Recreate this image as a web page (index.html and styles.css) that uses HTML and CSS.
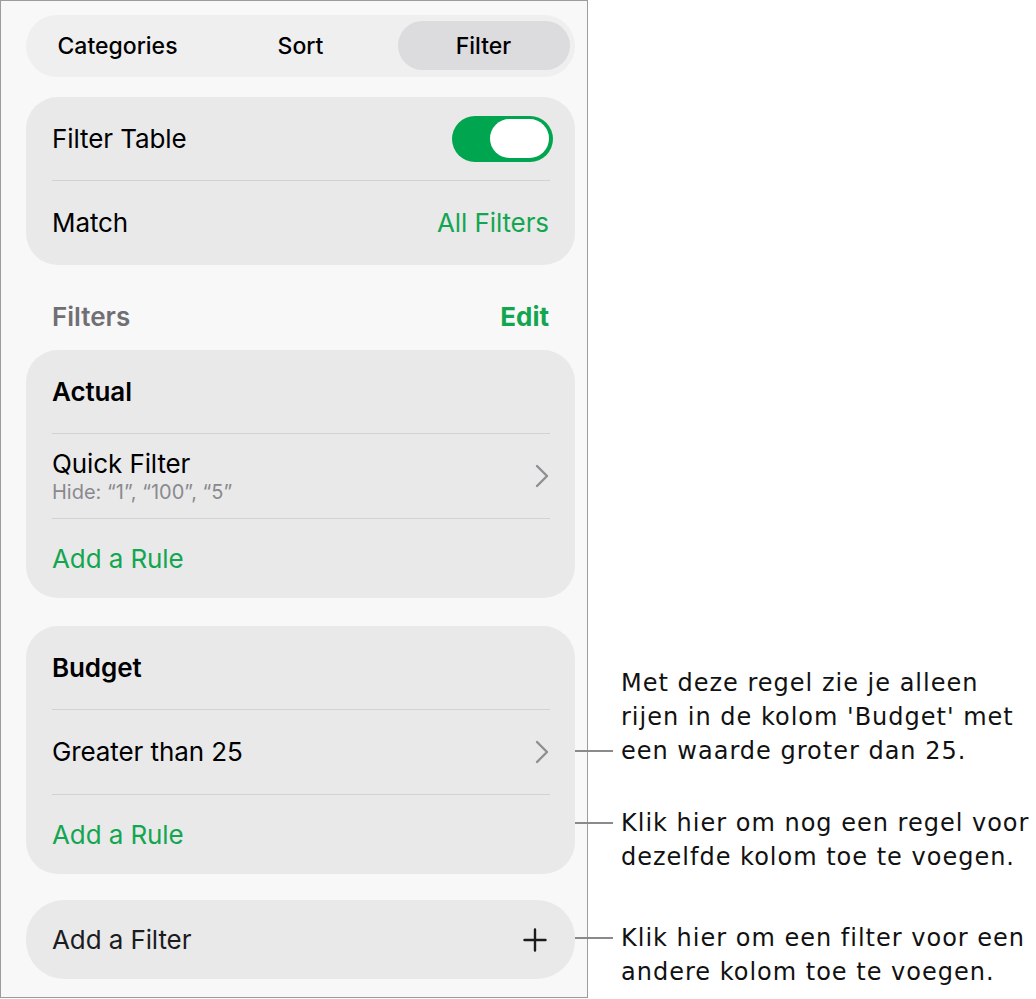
FILE: index.html
```html
<!DOCTYPE html>
<html lang="nl">
<head>
<meta charset="utf-8">
<title>Filter</title>
<link rel="stylesheet" href="styles.css">
</head>
<body>
<div class="page">
  <div class="panel">
    <div class="segmented">
      <div class="seg">Categories</div>
      <div class="seg">Sort</div>
      <div class="seg selected">Filter</div>
    </div>

    <div class="card">
      <div class="row row-first">
        <span class="label">Filter Table</span>
        <span class="toggle"><span class="knob"></span></span>
      </div>
      <div class="sep"></div>
      <div class="row row-mid">
        <span class="label">Match</span>
        <span class="label green">All Filters</span>
      </div>
    </div>

    <div class="section-head">
      <span class="head-title">Filters</span>
      <span class="head-edit">Edit</span>
    </div>

    <div class="card">
      <div class="row row-first"><span class="label bold">Actual</span></div>
      <div class="sep"></div>
      <div class="row row-mid">
        <div class="stack">
          <span class="label">Quick Filter</span>
          <span class="sub">Hide: “1”, “100”, “5”</span>
        </div>
        <svg class="chev" width="16" height="24" viewBox="0 0 16 24"><path d="M3 2 L13 12 L3 22" fill="none" stroke="#8e8e93" stroke-width="2.4" stroke-linecap="round" stroke-linejoin="round"/></svg>
      </div>
      <div class="sep"></div>
      <div class="row row-last"><span class="label green">Add a Rule</span></div>
    </div>

    <div class="card card-gap">
      <div class="row row-first"><span class="label bold">Budget</span></div>
      <div class="sep"></div>
      <div class="row row-mid">
        <span class="label">Greater than 25</span>
        <svg class="chev" width="16" height="24" viewBox="0 0 16 24"><path d="M3 2 L13 12 L3 22" fill="none" stroke="#8e8e93" stroke-width="2.4" stroke-linecap="round" stroke-linejoin="round"/></svg>
      </div>
      <div class="sep"></div>
      <div class="row row-last"><span class="label green">Add a Rule</span></div>
    </div>

    <div class="card add-card">
      <span class="label dim">Add a Filter</span>
      <svg class="plus" width="24" height="24" viewBox="0 0 24 24"><path d="M12 1.5 V22.5 M1.5 12 H22.5" fill="none" stroke="#1c1c1e" stroke-width="2.4" stroke-linecap="round"/></svg>
    </div>
  </div>

  <div class="note note-1">
    <span class="leader"></span>
    <p>Met deze regel zie je alleen<br>rijen in de kolom 'Budget' met<br>een waarde groter dan 25.</p>
  </div>
  <div class="note note-2">
    <span class="leader"></span>
    <p>Klik hier om nog een regel voor<br>dezelfde kolom toe te voegen.</p>
  </div>
  <div class="note note-3">
    <span class="leader"></span>
    <p>Klik hier om een filter voor een<br>andere kolom toe te voegen.</p>
  </div>
</div>
</body>
</html>
```

FILE: styles.css
```css
* { box-sizing: border-box; }
html, body { margin: 0; padding: 0; background: #ffffff; }
body { font-family: Inter, "Liberation Sans", sans-serif; color: #000; }

.page {
  position: relative;
  width: 1036px;
  height: 999px;
}

.panel {
  width: 588px;
  height: 998px;
  border: 1px solid #9c9c9c;
  background: #f8f8f8;
  padding: 14px 12px 0 25px;
  display: flex;
  flex-direction: column;
}

.segmented {
  width: 549px;
  height: 62px;
  border-radius: 31px;
  background: #efeff0;
  display: grid;
  grid-template-columns: repeat(3, 1fr);
  flex-shrink: 0;
}
.seg {
  margin: 6px 5.5px 7px;
  border-radius: 25px;
  display: flex;
  align-items: center;
  justify-content: center;
  font-size: 23px;
  font-weight: 500;
  letter-spacing: 0;
  color: #000;
}
.seg.selected { background: #dcdcdf; }

.card {
  width: 549px;
  background: #e9e9ea;
  border-radius: 32px;
  margin-top: 20px;
  flex-shrink: 0;
}
.card-gap { margin-top: 28px; }

.row {
  display: flex;
  align-items: center;
  justify-content: space-between;
  padding: 0 26px;
}
.row-first { height: 83px; }
.row-mid { height: 84px; }
.row-last { height: 79px; }

.sep {
  height: 1px;
  margin: 0 25px 0 26px;
  background: #d2d2d4;
}

.label {
  font-size: 26px;
  line-height: 30px;
  letter-spacing: -0.1px;
  color: #000;
}
.label.bold { font-weight: 600; }
.label.green { color: #13a650; }
.label.dim { color: #1c1c1e; }

.stack { display: flex; flex-direction: column; }
.sub {
  font-size: 20px;
  line-height: 24px;
  margin-top: 1px;
  color: #8a8a8e;
}

.chev { margin-right: -1px; }

.toggle {
  width: 101px;
  height: 46px;
  border-radius: 23px;
  background: #00a54f;
  display: flex;
  justify-content: flex-end;
  align-items: center;
  padding: 0 4px;
  margin-right: -4px;
}
.knob {
  width: 59px;
  height: 39px;
  border-radius: 20px;
  background: #ffffff;
}

.section-head {
  width: 549px;
  display: flex;
  justify-content: space-between;
  padding: 36px 26px 17px 26px;
  flex-shrink: 0;
}
.head-title {
  font-size: 26px;
  line-height: 32px;
  font-weight: 600;
  color: #707074;
}
.head-edit {
  font-size: 26px;
  line-height: 32px;
  font-weight: 700;
  color: #13a650;
}
.section-head + .card { margin-top: 0; }

.add-card {
  height: 79px;
  border-radius: 38px;
  margin-top: 26px;
  display: flex;
  align-items: center;
  justify-content: space-between;
  padding: 0 28px 0 26px;
}

/* callouts */
.note {
  position: absolute;
  left: 575px;
  display: flex;
  font-family: "DejaVu Sans", Verdana, sans-serif;
  font-size: 24px;
  line-height: 34px;
  letter-spacing: 1px;
  color: #111;
}
.note p { margin: 0; white-space: nowrap; }
.note-1 { top: 666px; align-items: flex-end; }
.note-2 { top: 806px; align-items: flex-start; }
.note-3 { top: 921px; align-items: flex-start; }
.leader {
  width: 38px;
  height: 34px;
  margin-right: 8px;
  flex-shrink: 0;
  display: flex;
  align-items: center;
}
.leader::before {
  content: "";
  display: block;
  width: 100%;
  height: 2px;
  background: #8a8a8a;
}
```
